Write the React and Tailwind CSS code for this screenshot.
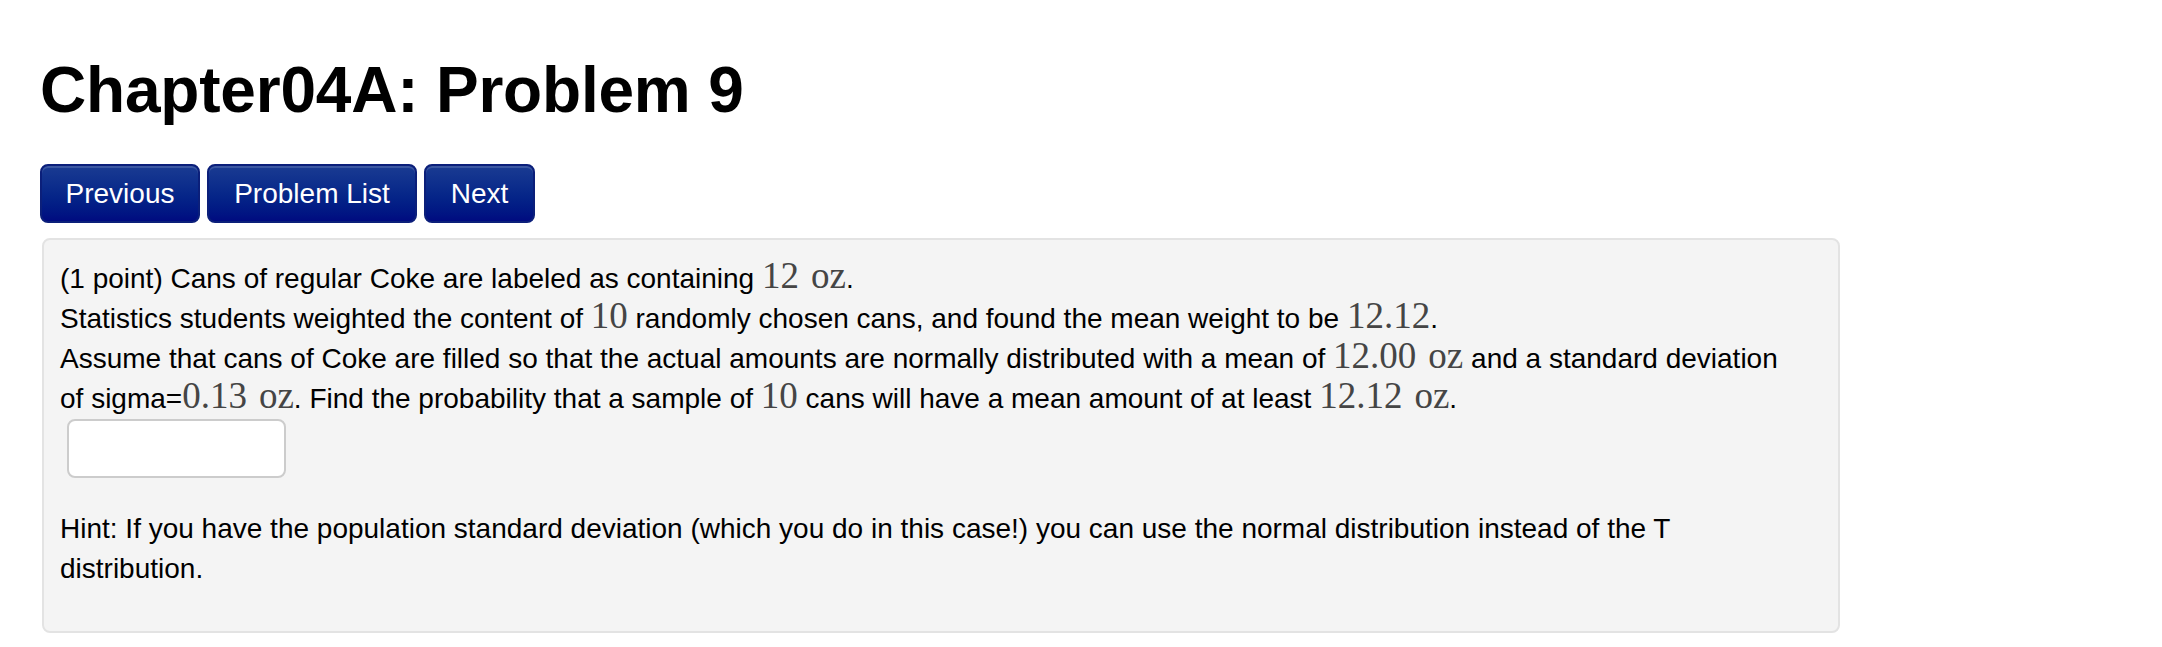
const sans = { fontFamily: '"Liberation Sans", Arial, Helvetica, sans-serif' };

function M({ children }) {
  return (
    <span
      className="text-[37px] leading-[0] text-[#454545]"
      style={{ fontFamily: '"Liberation Serif", "Times New Roman", serif' }}
    >
      {children}
    </span>
  );
}

function Unit({ children }) {
  return <span className="ml-[12px]">{children}</span>;
}

function NavButton({ label, width }) {
  return (
    <button
      className={`h-[59px] ${width} rounded-[8px] border-2 border-[#0b1f7a] bg-linear-to-b from-[#1a3b92] to-[#000a80] text-[28px] leading-none text-white shadow-[inset_0_2px_0_rgba(255,255,255,0.15)]`}
    >
      {label}
    </button>
  );
}

export default function App() {
  return (
    <div className="min-h-[647px] bg-white pl-[40px] pt-[50px] text-black" style={sans}>
      <h2 className="text-[64px] font-bold leading-[80px] tracking-[-0.2px]">
        Chapter04A: Problem 9
      </h2>

      <div className="mt-[34px] flex gap-[7px]">
        <NavButton label="Previous" width="w-[160px]" />
        <NavButton label="Problem List" width="w-[210px]" />
        <NavButton label="Next" width="w-[111px]" />
      </div>

      <div className="ml-[2px] mt-[15px] w-[1798px] rounded-[8px] border-2 border-[#e3e3e3] bg-[#f4f4f4] pb-[42px] pl-[16px] pr-[16px] pt-[19px] text-[28px] leading-[40px]">
        <div className="whitespace-nowrap">
          (1 point) Cans of regular Coke are labeled as containing <M>12<Unit>oz</Unit></M>.
          <br />
          Statistics students weighted the content of <M>10</M> randomly chosen cans, and found
          the mean weight to be <M>12.12</M>.
          <br />
          Assume that cans of Coke are filled so that the actual amounts are normally distributed
          with a mean of <M>12.00<Unit>oz</Unit></M> and a standard deviation
          <br />
          of sigma=<M>0.13<Unit>oz</Unit></M>. Find the probability that a sample of <M>10</M> cans
          will have a mean amount of at least <M>12.12<Unit>oz</Unit></M>.
        </div>

        <input
          type="text"
          className="ml-[7px] block h-[59px] w-[219px] rounded-[8px] border-2 border-[#cccccc] bg-white"
        />

        <p className="mt-[31px] whitespace-nowrap">
          Hint: If you have the population standard deviation (which you do in this case!) you can
          use the normal distribution instead of the T
          <br />
          distribution.
        </p>
      </div>
    </div>
  );
}
